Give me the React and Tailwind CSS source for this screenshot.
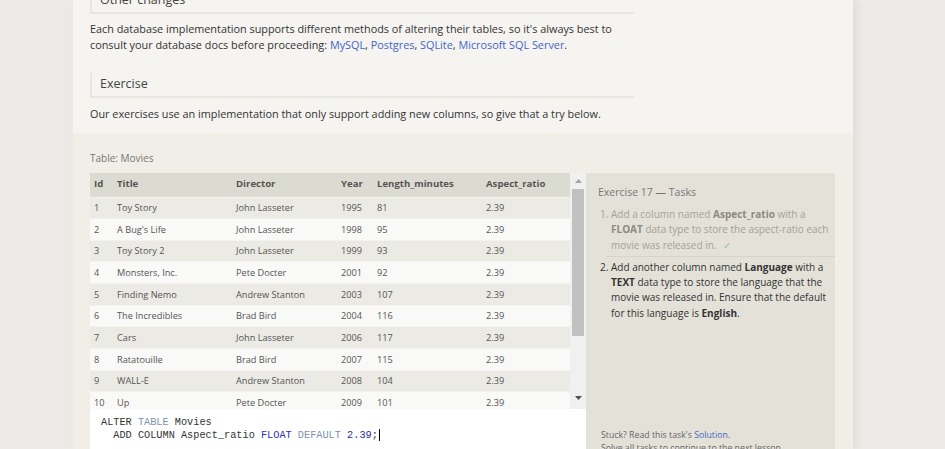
import React from "react";

const movies = [
  [1, "Toy Story", "John Lasseter", 1995, 81],
  [2, "A Bug's Life", "John Lasseter", 1998, 95],
  [3, "Toy Story 2", "John Lasseter", 1999, 93],
  [4, "Monsters, Inc.", "Pete Docter", 2001, 92],
  [5, "Finding Nemo", "Andrew Stanton", 2003, 107],
  [6, "The Incredibles", "Brad Bird", 2004, 116],
  [7, "Cars", "John Lasseter", 2006, 117],
  [8, "Ratatouille", "Brad Bird", 2007, 115],
  [9, "WALL-E", "Andrew Stanton", 2008, 104],
  [10, "Up", "Pete Docter", 2009, 101],
  [11, "Toy Story 3", "Lee Unkrich", 2010, 103],
];

function Heading({ children, className = "" }) {
  return (
    <div className={`h-[25px] w-[544px] pl-2 flex items-center border-l-2 border-b-2 border-[#e8e6e1] text-[12.5px] text-[#444] ${className}`}>
      {children}
    </div>
  );
}

export default function App() {
  return (
    <div className="h-[449px] overflow-hidden bg-[#ece9e6] font-['Open_Sans',sans-serif]">
      <div className="ml-[73px] w-[780px] h-full flex flex-col shadow-[4px_0_8px_rgba(0,0,0,0.05)]">
        {/* LESSON TEXT */}
        <div className="bg-[#f5f4f1] pl-[17px] h-[133px] shrink-0">
          <Heading className="mt-[-11px]">Other changes</Heading>
          <p className="mt-[7px] text-[10.85px] leading-[16px] text-[#333]">
            Each database implementation supports different methods of altering their tables, so it's always best to
            <br />
            consult your database docs before proceeding:{" "}
            <span className="text-[#4466c4]">MySQL</span>, <span className="text-[#4466c4]">Postgres</span>,{" "}
            <span className="text-[#4466c4]">SQLite</span>, <span className="text-[#4466c4]">Microsoft SQL Server</span>.
          </p>
          <Heading className="mt-[20px]">Exercise</Heading>
          <p className="mt-[8px] text-[10.85px] leading-[16px] text-[#333]">
            Our exercises use an implementation that only support adding new columns, so give that a try below.
          </p>
        </div>

        {/* EXERCISE AREA */}
        <div className="flex-1 bg-[#f0eee7] pl-[17px] pt-[18px]">
          <div className="text-[10px] leading-[14px] text-[#777]">Table: Movies</div>
          <div className="mt-[8px] flex">
            {/* LEFT: TABLE + EDITOR */}
            <div className="w-[496px] flex flex-col">
              <div className="h-[236px] flex overflow-hidden">
                <div className="w-[480px] overflow-hidden">
                  <table className="w-[480px] table-fixed border-collapse text-left text-[9.2px] text-[#555]">
                    <colgroup>
                      <col className="w-[23px]" />
                      <col className="w-[119px]" />
                      <col className="w-[105px]" />
                      <col className="w-[36px]" />
                      <col className="w-[109px]" />
                      <col className="w-[88px]" />
                    </colgroup>
                    <thead>
                      <tr className="h-[24px] bg-[#dcdbd1] text-[9.6px] font-bold text-[#555]">
                        <th className="pl-1 pb-[1px] font-bold">Id</th>
                        <th className="pl-1 pb-[1px] font-bold">Title</th>
                        <th className="pl-1 pb-[1px] font-bold">Director</th>
                        <th className="pl-1 pb-[1px] font-bold">Year</th>
                        <th className="pl-1 pb-[1px] font-bold">Length_minutes</th>
                        <th className="pl-1 pb-[1px] font-bold">Aspect_ratio</th>
                      </tr>
                    </thead>
                    <tbody>
                      {movies.map((m, i) => (
                        <tr
                          key={m[0]}
                          className={`h-[21.67px] border-t border-[#f3f2ee] ${i % 2 === 0 ? "bg-[#ebeae4]" : "bg-[#f9f9f7]"}`}
                        >
                          <td className="pl-1">{m[0]}</td>
                          <td className="pl-1">{m[1]}</td>
                          <td className="pl-1">{m[2]}</td>
                          <td className="pl-1">{m[3]}</td>
                          <td className="pl-1">{m[4]}</td>
                          <td className="pl-1">2.39</td>
                        </tr>
                      ))}
                    </tbody>
                  </table>
                </div>
                {/* SCROLLBAR */}
                <div className="w-[16px] bg-[#f0f0f0] flex flex-col items-center">
                  <div className="h-[16px] flex items-center justify-center">
                    <svg width="7" height="4" viewBox="0 0 7 4"><path d="M0 4 L3.5 0 L7 4 Z" fill="#a3a3a3" /></svg>
                  </div>
                  <div className="w-[12px] h-[147px] bg-[#c1c1c1]" />
                  <div className="flex-1" />
                  <div className="h-[22px] flex items-center justify-center">
                    <svg width="7" height="4" viewBox="0 0 7 4"><path d="M0 0 L7 0 L3.5 4 Z" fill="#505050" /></svg>
                  </div>
                </div>
              </div>
              {/* EDITOR */}
              <div className="h-[60px] bg-white pl-[11px] pt-[7px] font-['Liberation_Mono',monospace] text-[10.25px] leading-[13px] text-[#333] whitespace-pre">
                <div>
                  ALTER <span className="text-[#8193ad]">TABLE</span> Movies
                </div>
                <div>
                  {"  "}ADD COLUMN Aspect_ratio <span className="text-[#2f2fc0]">FLOAT</span>{" "}
                  <span className="text-[#8193ad]">DEFAULT</span> <span className="text-[#2a2a90]">2.39</span>;
                  <span className="inline-block w-px h-[12px] bg-black align-middle ml-px" />
                </div>
              </div>
            </div>

            {/* RIGHT: TASKS */}
            <div className="w-[249px] h-[300px] bg-[#e3e1d8] flex flex-col pl-[12px] pt-[12px]">
              <div className="text-[10.5px] leading-[14px] text-[#777]">Exercise 17 — Tasks</div>
              <ol className="mt-[8px] text-[10px] leading-[15.3px]">
                <li className="flex text-[#a4a29a] pb-[3px] pr-[6px]">
                  <span className="w-[13px] shrink-0 pl-[2px]">1.</span>
                  <span>
                    Add a column named <b className="text-[#8c8a83]">Aspect_ratio</b> with a{" "}
                    <b className="text-[#8c8a83]">FLOAT</b> data type to store the aspect-ratio each movie was released in.{" "}
                    <span className="text-[#9cc79c] ml-1">✓</span>
                  </span>
                </li>
                <li className="ml-[9px] border-t border-[#d6d4cb] pt-[3px]">
                  <div className="flex text-[#333] -ml-[9px] pr-[6px]">
                    <span className="w-[13px] shrink-0 pl-[2px]">2.</span>
                    <span>
                      Add another column named <b>Language</b> with a <b>TEXT</b> data type to store the language that the
                      movie was released in. Ensure that the default for this language is <b>English</b>.
                    </span>
                  </div>
                </li>
              </ol>
              <div className="mt-auto mb-[18px] text-[8.75px] leading-[13px] text-[#666] pl-[3px]">
                <div>
                  Stuck? Read this task's <span className="text-[#4466c4]">Solution</span>.
                </div>
                <div>Solve all tasks to continue to the next lesson.</div>
              </div>
            </div>
          </div>
        </div>
      </div>
    </div>
  );
}
